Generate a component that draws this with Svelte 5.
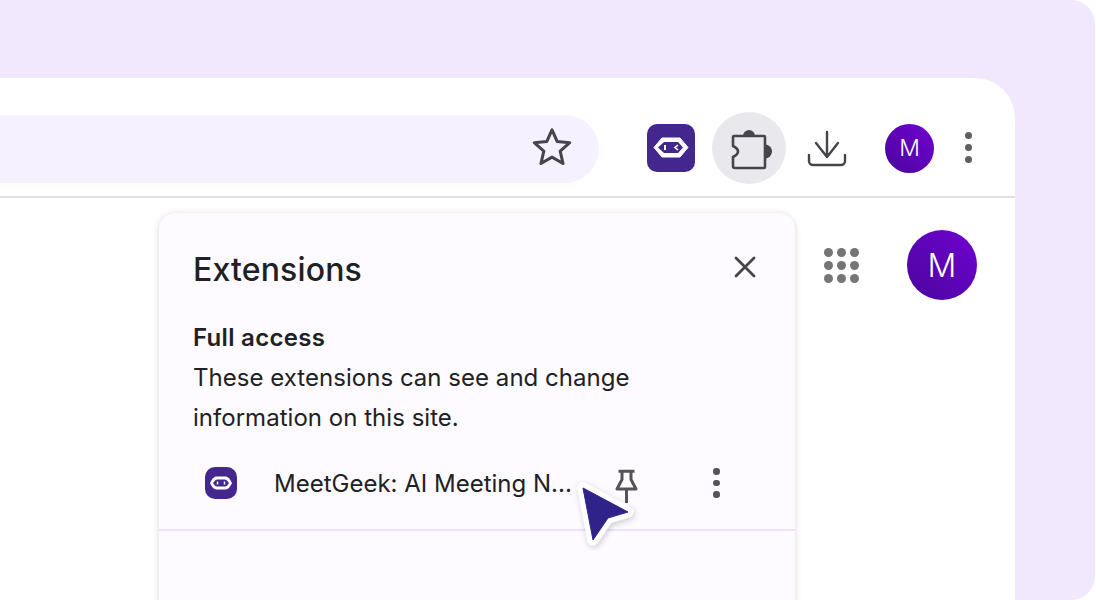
<script>
  const dots = [0,1,2,3,4,5,6,7,8];
</script>

<div class="stage">
  <div class="browser">
    <header class="toolbar">
      <div class="omnibox">
        <svg class="star" viewBox="0 0 40 40" width="42" height="42"><path d="M20 3.600l4.900 11.100 12 1.200-9.100 8 2.700 11.800L20 29.600 9.500 35.700l2.700-11.800-9.100-8 12-1.200z" fill="none" stroke="#47454b" stroke-width="2.900" stroke-linejoin="round"/></svg>
      </div>
      <div class="tools">
        <div class="ext-logo">
          <svg viewBox="0 0 48 48" width="48" height="48"><rect width="48" height="48" rx="10" fill="#44268f"/><path d="M15 14h18l8 9.500-8 9.500H15L7 23.500z" fill="#fff" stroke="#fff" stroke-linejoin="round"/><path d="M17 18h14l5 5.500-5 5.500H17l-6-5.500z" fill="#44268f"/><path d="M18 21v5" stroke="#fff" stroke-width="2"/><path d="M31 21l-3 2.500 3 2.500" fill="none" stroke="#fff" stroke-width="1.600"/></svg>
        </div>
        <div class="puzzle-btn">
          <svg viewBox="0 0 46 44" width="46" height="44"><circle cx="21" cy="10" r="6" fill="#47454b"/><circle cx="37" cy="25.500" r="7" fill="#47454b"/><path d="M6 10h30a1 1 0 0 1 1 1v30a1 1 0 0 1-1 1H7a2 2 0 0 1-2-2v-9q5-2.500 5-5.500t-5-5.500V11a1 1 0 0 1 1-1z" fill="#e9e8ec" stroke="#47454b" stroke-width="2.600" stroke-linejoin="round"/></svg>
        </div>
        <svg class="download" viewBox="0 0 40 38" width="40" height="38"><path d="M20 3v25M9 14l11 14 11-14M2 26v6a4 4 0 0 0 4 4h28a4 4 0 0 0 4-4v-6" fill="none" stroke="#47454b" stroke-width="2.400" stroke-linecap="round" stroke-linejoin="round"/></svg>
        <div class="avatar small">M</div>
        <div class="kebab big"><i></i><i></i><i></i></div>
      </div>
    </header>
    <div class="page">
      <section class="popup">
        <div class="title-row">
          <h2>Extensions</h2>
          <svg viewBox="0 0 24 24" width="24" height="24"><path d="M3 3l18 18M21 3 3 21" stroke="#47454b" stroke-width="2.800" stroke-linecap="round"/></svg>
        </div>
        <h3>Full access</h3>
        <p>These extensions can see and change<br>information on this site.</p>
        <div class="ext-row">
          <svg class="row-logo" viewBox="0 0 32 32" width="32" height="32"><rect width="32" height="32" rx="10" fill="#44268f"/><path d="M11 9.500h10q3 0 6 6.500-3 6.500-6 6.500H11q-3 0-6-6.500 3-6.500 6-6.500z" fill="#fff"/><path d="M12 12.500h8q2 0 4 3.500-2 3.500-4 3.500h-8q-2 0-4-3.500 2-3.500 4-3.500z" fill="#44268f"/><path d="M12.500 14.500v3M19.500 14.500v3" stroke="#fff" stroke-width="1.500"/></svg>
          <span class="ext-name">MeetGeek: AI Meeting N...</span>
          <svg class="pin" viewBox="0 0 24 36" width="24" height="36"><path d="M4.500 3.200h16M8 3.200V11.500L3 21h19L17 11.500V3.200M12.500 21v14" fill="none" stroke="#55535a" stroke-width="3" stroke-linejoin="round"/></svg>
          <div class="kebab"><i></i><i></i><i></i></div>
        </div>
        <div class="rest"></div>
      </section>
      <div class="apps">
        {#each dots as d (d)}<i></i>{/each}
      </div>
      <div class="avatar large">M</div>
    </div>
    <svg class="cursor" viewBox="0 0 70 76" width="70" height="76">
      <defs><filter id="s" x="-30%" y="-30%" width="160%" height="160%"><feDropShadow dx="1" dy="2" stdDeviation="3" flood-color="#000" flood-opacity=".2"/></filter></defs>
      <path d="M13 13 L58 37 L38 43 L23 65 Z" fill="#fff" stroke="#fff" stroke-width="11" stroke-linejoin="round" filter="url(#s)"/>
      <path d="M13 13 L58 37 L38 43 L23 65 Z" fill="#2f2389" stroke="#2f2389" stroke-width="1" stroke-linejoin="round"/>
    </svg>
  </div>
</div>

<style>
  :global(body) { margin: 0; background: #fff; }
  .stage {
    box-sizing: border-box;
    width: 1095px;
    height: 600px;
    padding: 78px 80px 0 0;
    background: #f1e8fe;
    border-radius: 0 24px 24px 0;
    overflow: hidden;
    font-family: Inter, "Liberation Sans", sans-serif;
    color: #202124;
  }
  .browser {
    position: relative;
    height: 522px;
    background: #fff;
    border-radius: 0 40px 0 0;
    overflow: hidden;
  }
  .toolbar {
    box-sizing: border-box;
    display: flex;
    height: 120px;
    padding-top: 34px;
    border-bottom: 2px solid #e3e1e7;
  }
  .omnibox {
    box-sizing: border-box;
    display: flex;
    align-items: center;
    justify-content: flex-end;
    width: 599px;
    height: 68px;
    margin-top: 3px;
    padding-right: 26px;
    background: #f6f1fe;
    border-radius: 0 34px 34px 0;
  }
  .star { margin-bottom: 4px; }
  .tools { display: flex; align-items: center; height: 72px; margin-left: 48px; }
  .ext-logo { width: 48px; height: 48px; }
  .ext-logo svg, .row-logo { display: block; }
  .puzzle-btn {
    box-sizing: border-box;
    display: flex;
    align-items: center;
    justify-content: center;
    width: 74px;
    height: 72px;
    margin-left: 17px;
    padding-left: 3px;
    background: #e9e8ec;
    border-radius: 50%;
  }
  .download { margin-left: 21px; }
  .avatar {
    display: flex;
    align-items: center;
    justify-content: center;
    flex: none;
    border-radius: 50%;
    color: #fff;
    font-weight: 300;
    background: linear-gradient(45deg, #4b059c, #6f03d2);
  }
  .avatar.small { width: 49px; height: 49px; margin-left: 38px; font-size: 23px; }
  .kebab { display: flex; flex-direction: column; gap: 5px; }
  .kebab i { display: block; width: 6.500px; height: 6.500px; border-radius: 50%; background: #55535a; }
  .kebab.big { margin: 0 0 2px 31px; }
  .kebab.big i { width: 7px; height: 7px; background: #5f5e63; }
  .page { display: flex; align-items: flex-start; padding-top: 15px; }
  .popup {
    box-sizing: border-box;
    flex: none;
    width: 636px;
    height: 420px;
    margin-left: 159px;
    padding: 34px 35px 0 34px;
    background: #fdfbff;
    border-radius: 16px 16px 0 0;
    box-shadow: 0 1px 6px rgba(60, 50, 90, .2);
  }
  .title-row { display: flex; align-items: center; justify-content: space-between; height: 44px; padding-right: 3px; }
  .title-row svg { margin-bottom: 5px; }
  h2 { margin: 1px 0 0; font-size: 32px; font-weight: 500; line-height: 44px; letter-spacing: .15px; }
  h3 { margin: 27px 0 0; font-size: 24px; font-weight: 600; line-height: 40px; letter-spacing: .3px; }
  p { margin: 0; font-size: 24px; line-height: 40px; letter-spacing: .03px; }
  .ext-row { box-sizing: border-box; display: flex; align-items: center; height: 91px; margin-left: 12px; padding-bottom: 1px; }
  .ext-name { width: 315px; margin-left: 37px; font-size: 24px; white-space: nowrap; }
  .pin { margin: 5px 0 0 25px; }
  .ext-row .kebab { margin-left: 75px; }
  .rest { margin: 0 -35px 0 -34px; border-top: 2px solid #ece3fb; }
  .apps {
    display: grid;
    grid-template-columns: repeat(3, 8px);
    grid-auto-rows: 8px;
    gap: 5px;
    margin: 35px 0 0 29px;
  }
  .apps i { width: 9px; height: 9px; border-radius: 50%; background: #757477; }
  .avatar.large { width: 70px; height: 70px; margin: 17px 0 0 49px; font-size: 32px; }
  .cursor { position: absolute; left: 570px; top: 397px; }
</style>
